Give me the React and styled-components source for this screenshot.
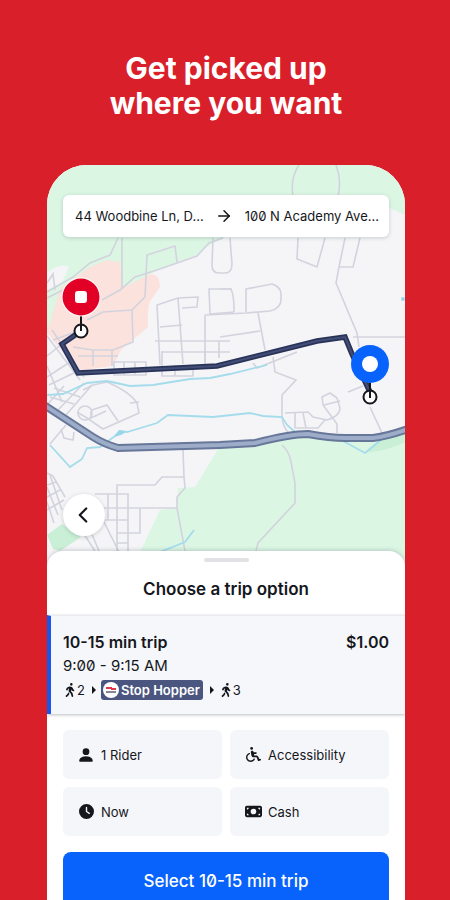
import styled, { createGlobalStyle, css } from 'styled-components';
import { FaClock, FaMoneyBill, FaPersonWalking, FaWheelchair } from 'react-icons/fa6';
import { BsPersonFill } from 'react-icons/bs';
import { LuArrowRight, LuChevronLeft } from 'react-icons/lu';

const OPTIONS = [
    { label: '1 Rider', Icon: BsPersonFill, size: 18 },
    { label: 'Accessibility', Icon: FaWheelchair, size: 15 },
    { label: 'Now', Icon: FaClock, size: 15 },
    { label: 'Cash', Icon: FaMoneyBill, size: 17 },
];

const ROADS = [
    'M118 238 L110 255 L90 263 L73 277 L47 292',
    'M122 238 V288',
    'M145 297 L147 255 L175 246 L177 262',
    'M223 238 L209 243 L197 256 L157 270 L135 277 L120 290 L102 300',
    'M145 297 L132 310 L103 312 L87 320',
    'M132 310 L133 342 L113 350 H93 L73 347',
    'M112 350 V366 M93 350 V366 M78 356 H118',
    'M160 365 L157 305 L178 298 L198 297 L197 307 L182 308 M178 298 L183 364',
    'M160 327 L182 325 M155 341 H230 M162 352 H230 M205 315 V362 M219 341 V358',
    'M232 289 L209 289 L210 314 L234 312',
    'M213 238 L212 265 Q212 273 219 273 H225 Q232 273 232 264 L230 238',
    'M220 289 H230 Q234 291 234 312',
    'M205 315 L246 313 L270 311 Q281 308 281 300 V294 Q281 287 272 284 L246 289 V312',
    'M258 313 L265 350 M220 337 L260 331',
    'M299 165 Q290 178 293 196 M336 165 Q342 180 338 196',
    'M298 238 L297 259 L317 267 L325 238',
    'M345 238 L339 267 L336 283 L357 333 L359 347',
    'M339 267 H353 L360 238 M353 337 H405',
    'M114 362 H146 V375 H114 Z M124 362 V375 M135 362 V375 M162 351 V376 H193 V366 M175 365 V376 M205 351 V364',
    'M83 390 L93 385 L107 382 Q130 392 137 403 L139 413 L103 429 L87 418 L77 412',
    'M92 410 L107 405 L118 421 M91 411 L91 418 L106 411 M139 402 L130 403',
    'M183 450 L184 477 H162 L155 485 H117 V551',
    'M184 477 L185 488 L177 497 V508 L185 551',
    'M95 494 H128 V551 M103 508 H177 M105 520 H128 M117 533 H140 V508 M117 543 H128 M101 516 L119 552 M108 494 V520',
    'M47 473 L53 476 L65 497 M47 485 L56 482 M47 497 L60 490 M47 510 L64 500 M50 475 L62 510 M47 487 L58 515 M47 502 L54 523 M84 534 L95 551 M91 532 L99 551',
    'M47 336 L80 380 M52 330 L84 377 M47 356 L62 344',
    'M47 366 L62 402 M47 377 L70 362 M49 385 L78 371',
    'M58 410 L84 383 M66 415 L92 385 M50 397 L74 404 M54 388 L80 397 M47 405 L64 386 M61 429 L64 438 L73 440 L74 432 M66 425 L50 444',
    'M273 357 L275 372 L296 380 L282 395 V417 Q283 428 289 433',
    'M285 413 L308 412 L313 417 L327 420 Q340 416 340 408 L337 398 L330 393 L322 397 L323 405 L337 424 V433 M324 405 L340 401',
    'M295 413 V428 H318 L325 420 M303 413 L306 428',
    'M348 392 L363 386 M370 407 L382 433 M253 363 L257 368 L297 352',
    'M282 445 Q289 451 291 462 L295 483 V503 L258 543 L256 551',
    'M47 283 L53 274 L55 290 M47 298 L67 288 M53 340 L81 330',
];

const WATER = [
    'M47 395 L63 394 L87 383 L107 381 L130 386 L153 385 L190 379 L210 378 L230 374 L267 365',
    'M50 445 L70 467 L82 459 L87 448 L100 447 L115 436 L120 431 L127 432 L157 423 L168 415 L213 417 L250 413 L263 416 L282 417 L287 425 L295 432',
    'M343 441 L365 453 L382 439',
    'M160 552 L185 542 L194 530',
];

const HIGHWAY = 'M44 405 L93 437 Q104 444 118 448 L220 445 L255 443 Q290 434 308 434 Q330 438 345 438 L373 438 Q388 436 408 429';
const ROUTE = 'M81 331 L62 344 L78 373 L217 366 L317 341 L345 337 L352 354 L370 392';

function MapDrawing() {
    return (
        <MapSvg viewBox="47 165 358 402" preserveAspectRatio="xMidYMin slice" aria-hidden="true">
            <rect x="47" y="165" width="358" height="402" fill="#f5f5f7" />
            <path fill="#dcf6e4" d="M47 165 H405 V215 L365 197 L223 238 L207 247 L197 255 L177 262 L157 270 L123 290 L47 330 Z" />
            <path fill="#f5f5f7" d="M47 273 Q60 262 69 267 L62 282 L47 290 Z" />
            <path fill="#fce2dd" d="M120 262 L107 260 L90 267 L60 288 L52 316 L47 332 L77 371 L113 366 L121 350 L148 327 Q147 305 151 300 L160 287 Q160 274 150 274 L123 288 Z" />
            <path fill="#dcf6e4" d="M140 552 L160 510 L177 508 L178 488 L195 487 L220 446 L255 443 L308 434 L345 438 L373 438 L405 430 V567 H140 Z" />
            <path fill="#c9efd6" d="M365 453 L382 439 L405 432 V442 Q390 450 365 453 Z" />
            <path fill="#c9efd6" d="M47 535 L62 524 L81 537 L60 551 L53 549 Z" />
            <g fill="none" stroke="#d2d3de" strokeWidth="1.6">
                {ROADS.map((d) => <path key={d} d={d} />)}
                <circle cx="85" cy="413" r="7" />
            </g>
            <g fill="none" stroke="#a5dcec" strokeWidth="1.8">
                {WATER.map((d) => <path key={d} d={d} />)}
            </g>
            <path fill="#98d5ea" d="M114 437 L119 430 L126 432 L121 435 Z" />
            <circle cx="403" cy="299" r="2" fill="#98d5ea" />
            <path d={HIGHWAY} fill="none" stroke="#677799" strokeWidth="8" />
            <path d={HIGHWAY} fill="none" stroke="#9dacc9" strokeWidth="4" />
            <path d={ROUTE} fill="none" stroke="#29335a" strokeWidth="5.5" />
            <path d={ROUTE} fill="none" stroke="#434e76" strokeWidth="2" />
            <g fill="#fff" stroke="#15171c" strokeWidth="2">
                <circle cx="81" cy="331" r="6.5" />
                <circle cx="370" cy="397" r="6.5" />
                <path d="M81 316 V331 M370 383 V398" />
            </g>
            <circle cx="81" cy="297" r="19.5" fill="#fff" />
            <circle cx="81" cy="297" r="18.5" fill="#e20026" />
            <rect x="75" y="291" width="12" height="12" rx="3" fill="#fff" />
            <circle cx="370" cy="364" r="19" fill="#0862fc" />
            <circle cx="370" cy="364" r="8" fill="#fff" />
        </MapSvg>
    );
}

function HopperLogo() {
    return (
        <svg width="16" height="16" viewBox="0 0 16 16" aria-hidden="true">
            <circle cx="8" cy="8" r="8" fill="#fff" />
            <path d="M3 6 H9 M8 7 H13" stroke="#e0384c" strokeWidth="2" />
            <path d="M3 10 H13" stroke="#5c606c" strokeWidth="1.5" />
        </svg>
    );
}

function App() {
    return (
        <Page>
            <GlobalStyle />
            <Headline>
                Get picked up
                <br />
                where you want
            </Headline>
            <Phone>
                <MapArea>
                    <MapDrawing />
                    <AddressBar>
                        <Address>44 Woodbine Ln, D...</Address>
                        <LuArrowRight size={18} />
                        <Address>100 N Academy Ave...</Address>
                    </AddressBar>
                    <BackButton type="button" aria-label="Back">
                        <LuChevronLeft size={26} />
                    </BackButton>
                </MapArea>
                <Sheet>
                    <Handle />
                    <SheetTitle>Choose a trip option</SheetTitle>
                    <Trip>
                        <TripTop>
                            <span>10-15 min trip</span>
                            <span>$1.00</span>
                        </TripTop>
                        <TripTime>9:00 - 9:15 AM</TripTime>
                        <Legs>
                            <FaPersonWalking size={14} />
                            <span>2</span>
                            <Caret />
                            <Line>
                                <HopperLogo />
                                Stop Hopper
                            </Line>
                            <Caret />
                            <FaPersonWalking size={14} />
                            <span>3</span>
                        </Legs>
                    </Trip>
                    <Actions>
                        <Options>
                            {OPTIONS.map(({ label, Icon, size }) => (
                                <Option key={label} type="button">
                                    <IconSlot><Icon size={size} /></IconSlot>
                                    {label}
                                </Option>
                            ))}
                        </Options>
                        <SelectButton type="button">Select 10-15 min trip</SelectButton>
                    </Actions>
                </Sheet>
            </Phone>
        </Page>
    );
}

export default App;

const GlobalStyle = createGlobalStyle`
    * {
        box-sizing: border-box;
    }
    body {
        margin: 0;
        background: #d9202a;
        font-family: Inter, "Liberation Sans", sans-serif;
        color: #15171c;
    }
    button {
        border: none;
        font-family: inherit;
        color: inherit;
        cursor: pointer;
    }
`;

const slashedZero = css`
    font-feature-settings: "zero";
`;

const Page = styled.main`
    height: 100vh;
    overflow: hidden;
    padding: 51px 45px 0 47px;
    background: #d9202a;
`;

const Headline = styled.h1`
    margin: 0 0 44px;
    font-size: 30px;
    font-weight: 700;
    line-height: 35px;
    text-align: center;
    color: #fff;
`;

const Phone = styled.section`
    overflow: hidden;
    border-radius: 40px 40px 0 0;
    background: #fff;
`;

const MapArea = styled.div`
    position: relative;
    display: flex;
    flex-direction: column;
    justify-content: space-between;
    align-items: flex-start;
    aspect-ratio: 358 / 402;
    padding: 30px 16px 31px;
`;

const MapSvg = styled.svg`
    position: absolute;
    inset: 0;
    width: 100%;
    height: 100%;
`;

const AddressBar = styled.div`
    position: relative;
    display: flex;
    align-items: center;
    justify-content: space-between;
    width: 100%;
    height: 42px;
    padding: 0 10px 0 12px;
    border-radius: 6px;
    background: #fff;
    box-shadow: 0 1px 4px rgba(30, 40, 60, 0.2);
`;

const Address = styled.span`
    font-size: 13px;
    white-space: nowrap;
    ${slashedZero}
`;

const BackButton = styled.button`
    position: relative;
    display: flex;
    align-items: center;
    justify-content: center;
    width: 42px;
    height: 42px;
    padding: 0 2px 0 0;
    border-radius: 50%;
    background: #fff;
    box-shadow: 0 1px 4px rgba(30, 40, 60, 0.2);
`;

const Sheet = styled.div`
    position: relative;
    margin-top: -16px;
    padding-top: 7px;
    border-radius: 16px 16px 0 0;
    background: #fff;
    box-shadow: 0 -1px 4px rgba(30, 40, 60, 0.2);
`;

const Handle = styled.div`
    width: 45px;
    height: 4px;
    margin: 0 auto;
    border-radius: 2px;
    background: #e1e2e5;
`;

const SheetTitle = styled.h2`
    margin: 0;
    padding: 17px 0 15px;
    font-size: 17px;
    font-weight: 600;
    line-height: 21px;
    text-align: center;
`;

const Trip = styled.article`
    padding: 14px 16px 12px 12px;
    border-top: 1px solid #e9ebef;
    border-left: 4px solid #1a56ea;
    background: #f5f7fb;
    box-shadow: 0 1px 3px rgba(30, 40, 60, 0.3);
`;

const TripTop = styled.div`
    display: flex;
    justify-content: space-between;
    font-size: 16px;
    font-weight: 600;
    line-height: 24px;
`;

const TripTime = styled.div`
    font-size: 15px;
    line-height: 24px;
    ${slashedZero}
`;

const Legs = styled.div`
    display: flex;
    align-items: center;
    height: 24px;
    font-size: 13px;
`;

const Caret = styled.i`
    margin: 0 5px 0 7px;
    border: 4px solid transparent;
    border-left-color: #15171c;
    border-right-width: 0;
`;

const Line = styled.span`
    display: flex;
    align-items: center;
    gap: 2px;
    height: 20px;
    padding: 0 3px 0 2px;
    border-radius: 3px;
    font-size: 13px;
    font-weight: 600;
    color: #fff;
    background: #4b5680;
`;

const Actions = styled.div`
    padding: 16px;
`;

const Options = styled.div`
    display: grid;
    grid-template-columns: 1fr 1fr;
    gap: 8px;
    margin-bottom: 16px;
`;

const Option = styled.button`
    display: flex;
    align-items: center;
    gap: 6px;
    height: 49px;
    padding: 0 14px;
    border-radius: 6px;
    font-size: 13px;
    background: #f5f6fa;
`;

const IconSlot = styled.span`
    display: flex;
    justify-content: center;
    width: 18px;
`;

const SelectButton = styled.button`
    width: 100%;
    height: 58px;
    border-radius: 8px;
    font-size: 17px;
    font-weight: 500;
    color: #fff;
    background: #0862fc;
    ${slashedZero}
`;
